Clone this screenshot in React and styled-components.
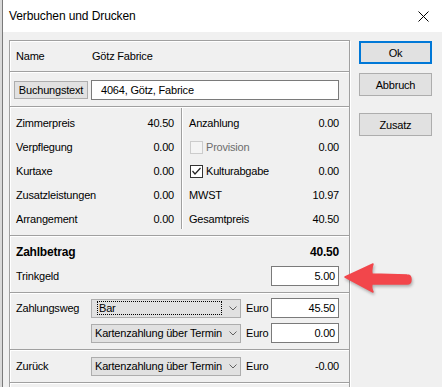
import React from 'react';
import styled, { createGlobalStyle } from 'styled-components';

const GlobalStyle = createGlobalStyle`
  html, body {
    margin: 0;
    padding: 0;
    background: #d9d9d9;
  }
  body {
    font-family: "Liberation Sans", Arial, sans-serif;
    font-size: 11px;
    letter-spacing: -0.2px;
    color: #000;
  }
`;

const Window = styled.div`
  position: relative;
  width: 440px;
  height: 387px;
  margin-left: 2px;
  border-left: 1px solid #7a7a7a;
  background: #f0f0f0;
  overflow: hidden;
`;

const TitleBar = styled.div`
  height: 32px;
  background: #fff;
  display: flex;
  align-items: center;
  justify-content: space-between;
  padding: 0 14px 0 6px;
`;

const Title = styled.span`
  font-size: 12px;
  letter-spacing: -0.1px;
  padding-bottom: 1px;
`;

const Body = styled.div`
  display: flex;
  align-items: flex-start;
  padding-left: 6px;
`;

const Panel = styled.div`
  width: 341px;
  height: 360px;
  margin-top: 8px;
  box-sizing: border-box;
  border: 1px solid #a0a0a0;
  box-shadow: inset 1px 1px 0 #fff, 1px 1px 0 #fff;
  display: flex;
  flex-direction: column;
`;

const Sep = styled.div`
  height: 0;
  border-top: 1px solid #a0a0a0;
  border-bottom: 1px solid #fff;
`;

const Section = styled.div`
  height: ${(p) => p.$h}px;
  box-sizing: border-box;
  padding: ${(p) => p.$pt || 0}px 10px 0 ${(p) => (p.$pl != null ? p.$pl : 6)}px;
  display: flex;
  align-items: ${(p) => (p.$pt ? 'stretch' : 'center')};
  flex-direction: ${(p) => (p.$pt ? 'column' : 'row')};
`;

const Label = styled.span`
  width: ${(p) => p.$w || 76}px;
  flex-shrink: 0;
  white-space: nowrap;
`;

const SmallButton = styled.div`
  width: 74px;
  height: 18px;
  box-sizing: border-box;
  background: #e1e1e1;
  border: 1px solid #adadad;
  display: flex;
  align-items: center;
  justify-content: center;
  white-space: nowrap;
`;

const TextInput = styled.div`
  width: ${(p) => p.$w}px;
  height: 20px;
  box-sizing: border-box;
  margin-left: ${(p) => p.$ml || 0}px;
  background: #fff;
  border: 1px solid #7a7a7a;
  display: flex;
  align-items: center;
  justify-content: ${(p) => (p.$right ? 'flex-end' : 'flex-start')};
  padding: ${(p) => (p.$right ? '0 3px 0 0' : '0 0 0 9px')};
  white-space: nowrap;
`;

const Columns = styled.div`
  height: 127px;
  display: flex;
  align-items: flex-start;
`;

const Col = styled.div`
  height: 121px;
  box-sizing: border-box;
  width: ${(p) => (p.$left ? 172 : 167)}px;
  padding: 3px ${(p) => (p.$left ? 7 : 10)}px 0 6px;
  border-right: ${(p) => (p.$left ? '1px solid #a0a0a0' : 'none')};
  border-left: ${(p) => (p.$left ? 'none' : '1px solid #fff')};
`;

const Row = styled.div`
  height: 24px;
  display: flex;
  align-items: center;
  justify-content: space-between;
  font-weight: ${(p) => (p.$bold ? 'bold' : 'normal')};
  font-size: ${(p) => (p.$bold ? '12px' : '11px')};
`;

const CheckLabel = styled.span`
  display: flex;
  align-items: center;
  gap: 3px;
  margin-left: 1px;
  color: ${(p) => (p.$disabled ? '#6d6d6d' : '#000')};
`;

const Box = styled.span`
  width: 13px;
  height: 13px;
  box-sizing: border-box;
  border: 1px solid ${(p) => (p.$disabled ? '#cccccc' : '#333')};
  background: ${(p) => (p.$disabled ? '#f4f4f4' : '#fff')};
  display: flex;
  align-items: center;
  justify-content: center;
`;

const PayGrid = styled.div`
  display: grid;
  grid-template-columns: 75px 150px 30px 68px;
  grid-auto-rows: 20px;
  row-gap: 5px;
  align-items: center;
`;

const Combo = styled.div`
  height: 19px;
  box-sizing: border-box;
  background: #e1e1e1;
  border: 1px solid #adadad;
  display: flex;
  align-items: stretch;
`;

const ComboText = styled.div`
  flex: 1;
  min-width: 0;
  overflow: hidden;
  white-space: nowrap;
  display: flex;
  align-items: center;
  padding-left: 3px;
`;

const Focus = styled.span`
  flex: 1;
  margin: 1px 0 1px 2px;
  padding-left: 1px;
  border: 1px dotted #000;
  display: flex;
  align-items: center;
`;

const ComboArrow = styled.div`
  width: 18px;
  flex-shrink: 0;
  display: flex;
  align-items: center;
  justify-content: flex-end;
  padding-right: 3px;
  box-sizing: border-box;
`;

const Euro = styled.span`
  padding-left: 5px;
`;

const Amount = styled.span`
  text-align: right;
`;

const ButtonCol = styled.div`
  display: flex;
  flex-direction: column;
  margin: 9px 0 0 9px;
`;

const DialogButton = styled.div`
  width: 73px;
  height: 23px;
  box-sizing: border-box;
  margin-top: ${(p) => p.$mt || 0}px;
  background: #e1e1e1;
  border: ${(p) => (p.$default ? '2px solid #0078d7' : '1px solid #adadad')};
  display: flex;
  align-items: center;
  justify-content: center;
`;

const ArrowMark = styled.svg`
  position: absolute;
  left: 337px;
  top: 258px;
  filter: drop-shadow(1px 2px 1.5px rgba(0, 0, 0, 0.28));
`;

const Chevron = () => (
  <svg width="8" height="5" viewBox="0 0 8 5">
    <polyline points="0.5,0.5 4,4 7.5,0.5" fill="none" stroke="#606060" strokeWidth="1" />
  </svg>
);

const Check = () => (
  <svg width="11" height="11" viewBox="0 0 11 11">
    <polyline points="1.5,5 4,8 9.5,2" fill="none" stroke="#222" strokeWidth="1.2" />
  </svg>
);

const PayCombo = ({ text, focused }) => (
  <Combo>
    <ComboText>{focused ? <Focus>{text}</Focus> : text}</ComboText>
    <ComboArrow>
      <Chevron />
    </ComboArrow>
  </Combo>
);

const leftRows = [
  ['Zimmerpreis', '40.50'],
  ['Verpflegung', '0.00'],
  ['Kurtaxe', '0.00'],
  ['Zusatzleistungen', '0.00'],
  ['Arrangement', '0.00'],
];

const App = () => {
  return (
    <>
      <GlobalStyle />
      <Window>
        <TitleBar>
          <Title>Verbuchen und Drucken</Title>
          <svg width="11" height="11" viewBox="0 0 11 11">
            <path d="M0.5,0.5 L10.5,10.5 M10.5,0.5 L0.5,10.5" stroke="#000" strokeWidth="1" />
          </svg>
        </TitleBar>
        <Body>
          <Panel>
            <Section $h={30}>
              <Label>Name</Label>
              <span>Götz Fabrice</span>
            </Section>
            <Sep />
            <Section $h={33} $pl={4}>
              <SmallButton>Buchungstext</SmallButton>
              <TextInput $w={248} $ml={3}>4064, Götz, Fabrice</TextInput>
            </Section>
            <Sep />
            <Columns>
              <Col $left>
                {leftRows.map(([l, v]) => (
                  <Row key={l}>
                    <span>{l}</span>
                    <span>{v}</span>
                  </Row>
                ))}
              </Col>
              <Col>
                <Row>
                  <span>Anzahlung</span>
                  <span>0.00</span>
                </Row>
                <Row>
                  <CheckLabel $disabled>
                    <Box $disabled />
                    Provision
                  </CheckLabel>
                  <span>0.00</span>
                </Row>
                <Row>
                  <CheckLabel>
                    <Box>
                      <Check />
                    </Box>
                    Kulturabgabe
                  </CheckLabel>
                  <span>0.00</span>
                </Row>
                <Row>
                  <span>MWST</span>
                  <span>10.97</span>
                </Row>
                <Row>
                  <span>Gesamtpreis</span>
                  <span>40.50</span>
                </Row>
              </Col>
            </Columns>
            <Sep />
            <Section $h={55} $pt={3}>
              <Row $bold>
                <span>Zahlbetrag</span>
                <span>40.50</span>
              </Row>
              <Row>
                <span>Trinkgeld</span>
                <TextInput $w={68} $right>5.00</TextInput>
              </Row>
            </Section>
            <Sep />
            <Section $h={55} $pt={4}>
              <PayGrid>
                <Label>Zahlungsweg</Label>
                <PayCombo text="Bar" focused />
                <Euro>Euro</Euro>
                <TextInput $w={68} $right>45.50</TextInput>
                <span />
                <PayCombo text="Kartenzahlung über Terminal" />
                <Euro>Euro</Euro>
                <TextInput $w={68} $right>0.00</TextInput>
              </PayGrid>
            </Section>
            <Sep />
            <Section $h={31} $pt={5}>
              <PayGrid>
                <Label>Zurück</Label>
                <PayCombo text="Kartenzahlung über Terminal" />
                <Euro>Euro</Euro>
                <Amount>-0.00</Amount>
              </PayGrid>
            </Section>
            <Sep />
          </Panel>
          <ButtonCol>
            <DialogButton $default>Ok</DialogButton>
            <DialogButton $mt={9}>Abbruch</DialogButton>
            <DialogButton $mt={17}>Zusatz</DialogButton>
          </ButtonCol>
        </Body>
        <ArrowMark width="80" height="44" viewBox="0 0 80 44">
          <path
            d="M5,19 L33,6 Q31,11 32,16 L67,17 Q71,17 71,21.5 Q71,26 67,26 L32,26 Q31,31 33,34 Z"
            fill="#f2464b"
            stroke="#f2464b"
            strokeWidth="1.5"
            strokeLinejoin="round"
          />
        </ArrowMark>
      </Window>
    </>
  );
};

export default App;
